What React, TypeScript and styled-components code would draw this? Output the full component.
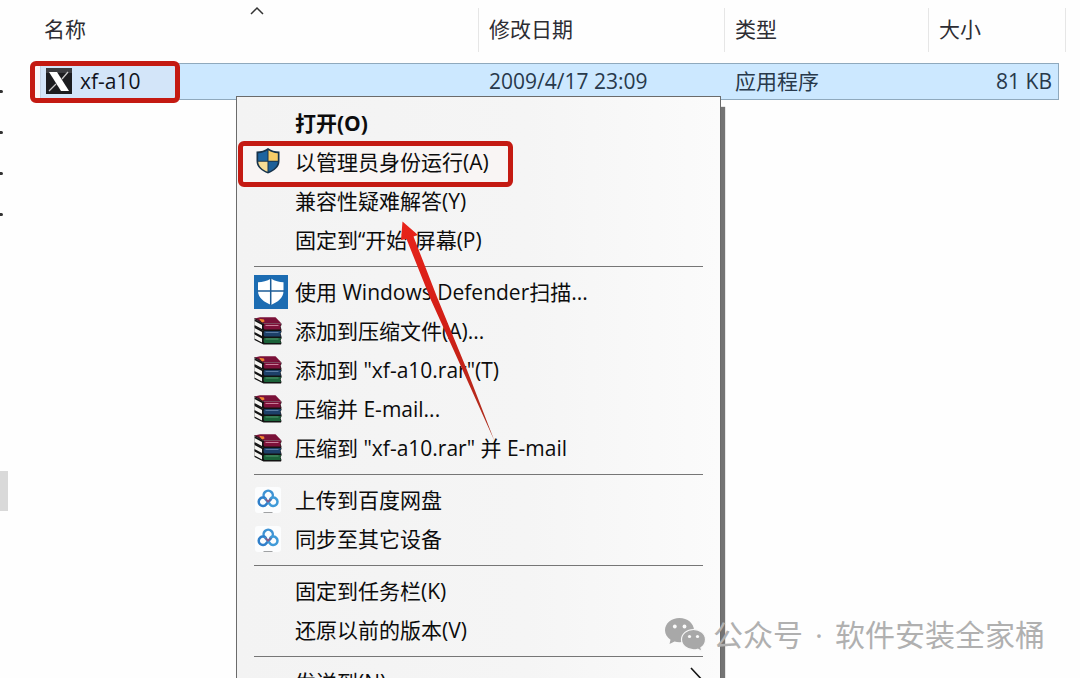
import React from "react";
import styled, { createGlobalStyle } from "styled-components";

const GlobalStyle = createGlobalStyle`
  * { box-sizing: border-box; }
  html, body { height: 100%; }
  body {
    margin: 0;
    background: #fefefe;
    font-family: "Open Sans", "Noto Sans CJK SC", sans-serif;
    font-size: 21px;
    line-height: 28px;
    overflow: hidden;
  }
`;

const Window = styled.div`
  position: relative;
  display: flex;
  gap: 32px;
  height: 100vh;
  padding-right: 21px;
  overflow: hidden;
`;

const TreeEdge = styled.aside`
  display: flex;
  flex-direction: column;
  flex: none;
  width: 8px;
  padding-top: 90px;
`;

const TreeMark = styled.span`
  width: 3px;
  height: 3px;
  margin-bottom: 38px;
  border-radius: 0 2px 2px 0;
  background: #333;
`;

const ScrollThumb = styled.span`
  height: 40px;
  margin-top: 217px;
  background: #d9d9d9;
`;

const Files = styled.main`
  flex: 1;
  min-width: 0;
`;

const FileTable = styled.table`
  width: 100%;
  table-layout: fixed;
  border-collapse: separate;
  border-spacing: 0;
`;

const Column = styled.col<{ $width?: number }>`
  width: ${(p) => (p.$width ? `${p.$width}px` : "auto")};
`;

const HeadCell = styled.th<{ $first?: boolean }>`
  position: relative;
  height: 63px;
  padding: 0 0 6px ${(p) => (p.$first ? 4 : 11)}px;
  color: #2d2d33;
  font-weight: 400;
  text-align: left;

  &::before {
    content: ${(p) => (p.$first ? "none" : '""')};
    position: absolute;
    left: 0;
    top: 8px;
    bottom: 11px;
    width: 1px;
    background: #e6e6e6;
  }

  &:last-child::after {
    content: "";
    position: absolute;
    right: -7px;
    top: 8px;
    bottom: 11px;
    width: 1px;
    background: #e6e6e6;
  }
`;

const SortCaret = styled.svg`
  position: absolute;
  left: 50%;
  top: 6px;
  margin-left: -10px;
`;

const Cell = styled.td<{ $first?: boolean; $numeric?: boolean }>`
  position: relative;
  height: 37px;
  padding: 0 ${(p) => (p.$numeric ? 6 : 0)}px 2px ${(p) => (p.$first ? 6 : 11)}px;
  border: solid #8fa9bd;
  border-width: 1px ${(p) => (p.$numeric ? 1 : 0)}px 1px 0;
  background: #cce8ff;
  color: #28394b;
  text-align: ${(p) => (p.$numeric ? "right" : "left")};
`;

const FileName = styled.div`
  position: relative;
  display: flex;
  align-items: center;
  gap: 8px;
  color: #10131c;
`;

const NameMark = styled.span`
  position: absolute;
  left: -10px;
  top: -3px;
  width: 150px;
  height: 42px;
  border: 5px solid #c41a12;
  border-radius: 6px;
  background: linear-gradient(90deg, #fbf6f8 5px, #b3bfd0 5px, #d3e5f9 6px);
`;

const Menu = styled.div`
  position: absolute;
  left: 236px;
  top: 96px;
  width: 485px;
  padding: 7px 0;
  border: 1px solid #6b6b6b;
  background: linear-gradient(90deg, #f3f3f3, #f5f5f5 60%, #fbfbfb);
  box-shadow: 4px 11px 1px #747474;
`;

const MenuItem = styled.button<{ $strong?: boolean }>`
  position: relative;
  display: flex;
  align-items: center;
  gap: 7px;
  width: 100%;
  height: 39px;
  padding: 0 14px 2px 17px;
  border: 0;
  background: none;
  color: #0c0c0c;
  font: inherit;
  font-weight: ${(p) => (p.$strong ? 700 : 400)};
  text-align: left;
  white-space: nowrap;
`;

const IconSlot = styled.span`
  position: relative;
  display: flex;
  flex: none;
  width: 34px;
`;

const Label = styled.span`
  position: relative;
  flex: 1;
`;

const ItemMark = styled.span`
  position: absolute;
  left: 1px;
  top: -2px;
  width: 275px;
  height: 46px;
  border: 5px solid #c41a12;
  border-radius: 6px;
  background: #f9f5f4;
`;

const Divider = styled.hr`
  height: 1px;
  margin: 6px 17px;
  border: 0;
  background: #767676;
`;

const Arrow = styled.svg`
  position: absolute;
  left: 157px;
  top: 118px;
`;

const Watermark = styled.div`
  position: absolute;
  right: 35px;
  bottom: 21px;
  display: flex;
  align-items: center;
  gap: 7px;
  color: #b0b0b0;
  font-size: 30px;
  line-height: 44px;
`;

const WatermarkText = styled.span`
  display: flex;
  gap: 12px;
`;

const AppIcon = () => (
  <svg width="26" height="26" viewBox="0 0 26 26">
    <rect width="26" height="26" fill="#1c1d20" />
    <path d="M0 0h26v5H0z" fill="#3b3c40" />
    <path d="M3 4h8l12 19h-8z" fill="#fff" />
    <path d="M22 4l-6 7M10 16l-7 7" stroke="#c9c9c9" strokeWidth="1.300" />
  </svg>
);

const UacShield = () => (
  <svg width="28" height="28" viewBox="0 0 28 28">
    <path d="M14 0c3 2.500 7 3.400 11.500 3.600v9.400c0 6-5 10-11.500 12.500C7.500 23 2.500 19 2.500 13V3.600C7 3.400 11 2.500 14 0z" fill="#17324a" />
    <path d="M13.500 2.300C10.800 4.200 8 5 4.200 5.300v7.500h9.300z" fill="#1d64a0" />
    <path d="M14.500 2.300c2.700 1.900 5.500 2.700 9.300 3v7.500h-9.300z" fill="#f8cd68" />
    <path d="M4.200 13.800h9.300V23.800C8.500 21.600 4.600 18.800 4.200 13.800z" fill="#f6dc95" />
    <path d="M23.800 13.800h-9.300V23.800c5-2.200 8.900-5 9.300-10z" fill="#1d5f98" />
  </svg>
);

const DefenderIcon = () => (
  <svg width="34" height="34" viewBox="0 0 34 34">
    <rect width="34" height="34" fill="#1c6cb2" />
    <path d="M17 3.500c4 2.700 8 3.500 12.500 3.800v9c0 6.500-6 11-12.500 13.700C10.500 27.300 4 22.800 4 16.300v-9C8.500 7 13 6.200 17 3.500z" fill="#fff" />
    <path d="M16.700 3v27M3.500 16h27" stroke="#1c5c96" strokeWidth="1.500" />
  </svg>
);

const Book = ({ y, color, light }: { y: number; color: string; light: string }) => (
  <g transform={`translate(0 ${y})`}>
    <path d="M.5 0l8.500 4.500h18.500V6l-1 1.500 1 3-.5 1.500H9.500L.5 7.500z" fill="#121212" />
    <path d="M.5 2l7.500 4v4L.5 6z" fill="#f6f5f2" />
    <path d="M10.500 5h16.500v1l-1 2 1 2.500H10.500c-1.200-1.500-1.200-4 0-5.500z" fill={color} />
    <path d="M11.500 6.500h13" stroke={light} strokeWidth="1" opacity=".75" />
  </g>
);

const BooksIcon = () => (
  <svg width="28" height="28" viewBox="0 0 28 28">
    <Book y={15.5} color="#1b6239" light="#69a881" />
    <Book y={9} color="#1d4069" light="#6d8fb5" />
    <Book y={2} color="#7d1139" light="#e3a3ba" />
    <path d="M.5 1.500L6 .3h15.500l6 6.200H9.500z" fill="#7a1138" />
    <path d="M.5 1.500l9 5" stroke="#1a0a10" />
    <path d="M5 1.800l5 .7.500 2-2.500 1z" fill="#f0862f" />
  </svg>
);

const NetdiskIcon = () => (
  <svg width="28" height="28" viewBox="0 0 28 28">
    <rect x="1" y="1" width="26" height="26" rx="3" fill="#fcfdfe" />
    <g fill="none" strokeWidth="2.500">
      <path d="M10.700 12.300a4.600 4.600 0 1 1 7 0" stroke="#3f93d4" />
      <path d="M12.200 13.200a4.200 4.200 0 1 0 0 5.200L17.500 12.600" stroke="#2f7fca" />
      <path d="M10.700 12.300l5.300 6.100a4.200 4.200 0 1 0 0-5.200" stroke="#3f9ad8" />
      <path d="M11.500 13l2.500 2.800 2.500-2.800" stroke="#8a5a86" strokeWidth="1.600" />
    </g>
    <path d="M9.500 26.500h9" stroke="#a0a2a4" />
  </svg>
);

const SubmenuChevron = () => (
  <svg width="16" height="30" viewBox="0 0 16 30">
    <path d="M1 1l13 14L1 29" fill="none" stroke="#161616" strokeWidth="1.600" />
  </svg>
);

const WeChatIcon = () => (
  <svg width="41" height="34" viewBox="0 0 41 34">
    <path d="M14.500 0C6.500 0 0 5.400 0 12.200c0 3.900 2.100 7.200 5.500 9.500L4.500 26l5-2.500c1.600.5 3.300.8 5 .8 8 0 14.500-5.400 14.500-12.100S22.500 0 14.500 0z" fill="#a8a8a8" />
    <path d="M40.500 21.500c0-5.700-5.400-10-12-10s-12 4.300-12 10 5.400 10.300 12 10.300c1.500 0 2.900-.2 4.200-.6l4.300 2.300-1.100-3.800c2.800-1.800 4.600-4.900 4.600-8.200z" fill="#a8a8a8" stroke="#f8f8f8" strokeWidth="1.200" />
    <g fill="#fafafa">
      <circle cx="9.800" cy="8.500" r="1.900" />
      <circle cx="19.500" cy="8.500" r="1.900" />
      <circle cx="24.500" cy="18.500" r="1.600" />
      <circle cx="32.500" cy="18.500" r="1.600" />
    </g>
  </svg>
);

type Entry = {
  label: string;
  icon?: React.ReactNode;
  strong?: boolean;
  marked?: boolean;
  submenu?: boolean;
};

const groups: Entry[][] = [
  [
    { label: "打开(O)", strong: true },
    { label: "以管理员身份运行(A)", icon: <UacShield />, marked: true },
    { label: "兼容性疑难解答(Y)" },
    { label: "固定到“开始”屏幕(P)" },
  ],
  [
    { label: "使用 Windows Defender扫描...", icon: <DefenderIcon /> },
    { label: "添加到压缩文件(A)...", icon: <BooksIcon /> },
    { label: '添加到 "xf-a10.rar"(T)', icon: <BooksIcon /> },
    { label: "压缩并 E-mail...", icon: <BooksIcon /> },
    { label: '压缩到 "xf-a10.rar" 并 E-mail', icon: <BooksIcon /> },
  ],
  [
    { label: "上传到百度网盘", icon: <NetdiskIcon /> },
    { label: "同步至其它设备", icon: <NetdiskIcon /> },
  ],
  [{ label: "固定到任务栏(K)" }, { label: "还原以前的版本(V)" }],
  [{ label: "发送到(N)", submenu: true }],
];

export default function App() {
  return (
    <>
      <GlobalStyle />
      <Window>
        <TreeEdge>
          <TreeMark />
          <TreeMark />
          <TreeMark />
          <TreeMark />
          <ScrollThumb />
        </TreeEdge>
        <Files>
          <FileTable>
            <colgroup>
              <Column />
              <Column $width={246} />
              <Column $width={204} />
              <Column $width={131} />
            </colgroup>
            <thead>
              <tr>
                <HeadCell $first>
                  名称
                  <SortCaret width="16" height="10" viewBox="0 0 16 10">
                    <path d="M2 8l6-6 6 6" fill="none" stroke="#333" strokeWidth="1.500" />
                  </SortCaret>
                </HeadCell>
                <HeadCell>修改日期</HeadCell>
                <HeadCell>类型</HeadCell>
                <HeadCell>大小</HeadCell>
              </tr>
            </thead>
            <tbody>
              <tr>
                <Cell $first>
                  <NameMark />
                  <FileName>
                    <AppIcon />
                    xf-a10
                  </FileName>
                </Cell>
                <Cell>2009/4/17 23:09</Cell>
                <Cell>应用程序</Cell>
                <Cell $numeric>81 KB</Cell>
              </tr>
            </tbody>
          </FileTable>
        </Files>

        <Menu role="menu">
          {groups.map((entries, i) => (
            <React.Fragment key={i}>
              {i > 0 && <Divider />}
              {entries.map((entry) => (
                <MenuItem key={entry.label} type="button" role="menuitem" $strong={entry.strong}>
                  {entry.marked && <ItemMark />}
                  <IconSlot>{entry.icon}</IconSlot>
                  <Label>{entry.label}</Label>
                  {entry.submenu && <SubmenuChevron />}
                </MenuItem>
              ))}
            </React.Fragment>
          ))}
          <Arrow width="110" height="230" viewBox="394 215 110 230">
            <defs>
              <linearGradient id="arrow" x1="0" y1="0" x2="0" y2="1">
                <stop offset="0" stopColor="#e8231a" />
                <stop offset=".5" stopColor="#d01f16" />
                <stop offset="1" stopColor="#a8301f" />
              </linearGradient>
            </defs>
            <path d="M402.500 221.500L418 235l-4.500 1.500L437 297l30 73 27.500 71-31-69-33-73-24-60-5.500 1z" fill="url(#arrow)" />
          </Arrow>
        </Menu>

        <Watermark>
          <WeChatIcon />
          <WatermarkText>
            <span>公众号</span>
            <span>·</span>
            <span>软件安装全家桶</span>
          </WatermarkText>
        </Watermark>
      </Window>
    </>
  );
}
